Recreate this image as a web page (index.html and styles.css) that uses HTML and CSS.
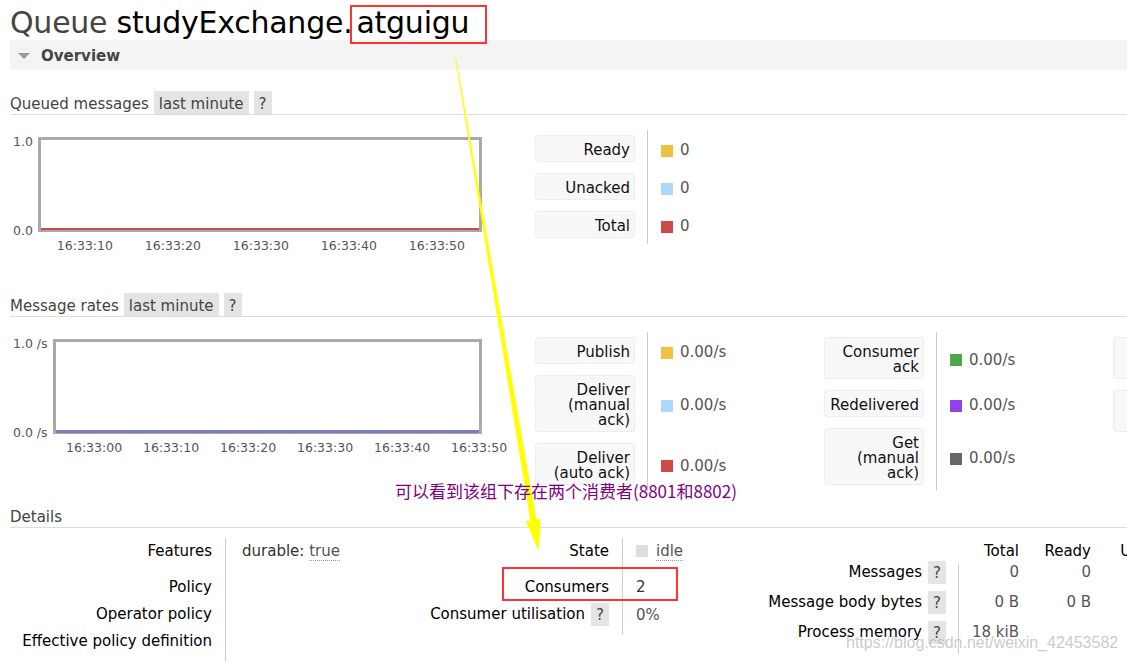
FILE: index.html
```html
<!DOCTYPE html>
<html lang="en">
<head>
    <meta charset="UTF-8">
    <meta name="viewport" content="width=device-width, initial-scale=1.0">
    <title>RabbitMQ Management - Queue studyExchange.atguigu</title>
    <link rel="stylesheet" href="styles.css">
</head>
<body>
    <div id="main">
        <h1>Queue <b>studyExchange.<span class="mark">atguigu</span></b></h1>

        <!-- Overview -->
        <div class="section-bar"><span class="toggle"></span>Overview</div>

        <h3 class="sub-head">Queued messages <span class="tag">last minute</span><span class="help">?</span></h3>
        <div class="chart-row">
            <div class="chart">
                <div class="y-axis"><span>1.0</span><span>0.0</span></div>
                <div class="plot-col">
                    <div class="plot"><div class="series red"></div></div>
                    <div class="x-axis">
                        <span>16:33:10</span><span>16:33:20</span><span>16:33:30</span><span>16:33:40</span><span>16:33:50</span>
                    </div>
                </div>
            </div>
            <div class="legend">
                <div class="legend-group">
                    <div class="divider"></div>
                    <div class="lbl">Ready</div><div class="val"><i class="sq yellow"></i>0</div>
                    <div class="lbl">Unacked</div><div class="val"><i class="sq blue"></i>0</div>
                    <div class="lbl">Total</div><div class="val"><i class="sq red"></i>0</div>
                </div>
            </div>
        </div>

        <h3 class="sub-head rates-head">Message rates <span class="tag">last minute</span><span class="help">?</span></h3>
        <div class="chart-row">
            <div class="chart">
                <div class="y-axis"><span>1.0 /s</span><span>0.0 /s</span></div>
                <div class="plot-col">
                    <div class="plot"><div class="series purple"></div></div>
                    <div class="x-axis rates">
                        <span>16:33:00</span><span>16:33:10</span><span>16:33:20</span><span>16:33:30</span><span>16:33:40</span><span>16:33:50</span>
                    </div>
                </div>
            </div>
            <div class="legend">
                <div class="legend-group">
                    <div class="divider"></div>
                    <div class="lbl">Publish</div><div class="val"><i class="sq yellow"></i>0.00/s</div>
                    <div class="lbl">Deliver (manual ack)</div><div class="val"><i class="sq blue"></i>0.00/s</div>
                    <div class="lbl">Deliver (auto ack)</div><div class="val"><i class="sq red"></i>0.00/s</div>
                </div>
                <div class="legend-group">
                    <div class="divider"></div>
                    <div class="lbl">Consumer ack</div><div class="val"><i class="sq green"></i>0.00/s</div>
                    <div class="lbl">Redelivered</div><div class="val"><i class="sq violet"></i>0.00/s</div>
                    <div class="lbl">Get (manual ack)</div><div class="val"><i class="sq grey"></i>0.00/s</div>
                </div>
                <div class="legend-group">
                    <div class="divider"></div>
                    <div class="lbl">Get (auto ack)</div><div class="val"><i class="sq yellow"></i>0.00/s</div>
                    <div class="lbl">Get (empty)</div><div class="val"><i class="sq blue"></i>0.00/s</div>
                </div>
            </div>
        </div>

        <!-- Details -->
        <h3 class="sub-head details-head">Details</h3>
        <div class="details">
            <div class="facts left">
                <div class="th tall">Features</div><div class="td tall">durable: <abbr>true</abbr></div>
                <div class="th">Policy</div><div class="td"></div>
                <div class="th">Operator policy</div><div class="td"></div>
                <div class="th last">Effective policy definition</div><div class="td last"></div>
            </div>
            <div class="facts mid">
                <div class="th tall">State</div><div class="td tall"><i class="state"></i><abbr>idle</abbr></div>
                <div class="th">Consumers</div><div class="td">2</div>
                <div class="th help-row last">Consumer utilisation <span class="help">?</span></div><div class="td help-row last">0%</div>
            </div>
            <div class="stats">
                <div class="s-divider"></div>
                <div class="s-head c5">Total</div><div class="s-head c6">Ready</div><div class="s-head c7">Unacked</div>
                <div class="s-th">Messages</div><div class="s-help"><span class="help">?</span></div>
                <div class="s-val c5">0</div><div class="s-val c6">0</div><div class="s-val c7">0</div>
                <div class="s-th">Message body bytes</div><div class="s-help"><span class="help">?</span></div>
                <div class="s-val c5">0 B</div><div class="s-val c6">0 B</div><div class="s-val c7">0 B</div>
                <div class="s-th">Process memory</div><div class="s-help"><span class="help">?</span></div>
                <div class="s-val c5">18 kiB</div>
            </div>
        </div>
    </div>

    <!-- Annotations drawn over the page -->
    <div class="annotations">
        <svg class="arrow" width="1127" height="662" viewBox="0 0 1127 662">
            <polygon fill="#ffff00" points="455,57.1 456,56.9 536.3,519.5 540.7,518.8 538.5,551 525.9,521.2 530.3,520.5"/>
        </svg>
        <div class="note" lang="zh-CN">可以看到该组下存在两个消费者(8801和8802)</div>
        <div class="red-box"></div>
        <div class="watermark">https://blog.csdn.net/weixin_42453582</div>
    </div>
</body>
</html>
```

FILE: styles.css
```css
/* Page */
body {
    margin: 0;
    width: 1127px;
    height: 662px;
    position: relative;
    overflow: hidden;
    font-family: "DejaVu Sans", Verdana, sans-serif;
    font-size: 15px;
    line-height: 15px;
    color: #444;
    background: #fff;
}
#main {
    padding-left: 10px;
}
h1 {
    margin: 6px 0 0 0;
    font-size: 30px;
    line-height: 34px;
    font-weight: normal;
    letter-spacing: -0.25px;
    color: #444;
    white-space: nowrap;
}
h1 b {
    font-weight: normal;
    color: #000;
}
.mark {
    position: relative;
    margin-left: 4px;
}
.mark::after {
    content: "";
    position: absolute;
    left: -6px;
    right: -18px;
    top: 0;
    bottom: -4px;
    border: 2px solid #f33;
}

/* Section bar */
.section-bar {
    height: 30px;
    box-sizing: border-box;
    padding-top: 2px;
    background: #f4f4f4;
    display: flex;
    align-items: center;
    font-weight: bold;
    color: #444;
}
.toggle {
    width: 0;
    height: 0;
    border-left: 6.5px solid transparent;
    border-right: 6.5px solid transparent;
    border-top: 6px solid #9a9a9a;
    margin: 0 11px 0 8px;
}

/* Sub headings */
.sub-head {
    margin: 21px 0 0 0;
    height: 23px;
    display: flex;
    align-items: stretch;
    gap: 5px;
    line-height: 26px;
    border-bottom: 1px solid #ddd;
    font-size: 15px;
    font-weight: normal;
    color: #444;
    white-space: nowrap;
}
.rates-head {
    margin-top: 40px;
}
.details-head {
    margin-top: 13px;
}
.tag,
.help {
    display: inline-block;
    padding: 0 5px;
    background: #e4e4e4;
    color: #444;
}

/* Charts */
.chart-row {
    display: flex;
    align-items: flex-start;
    gap: 53px;
    margin-top: 15px;
}
.chart {
    width: 472px;
    flex-shrink: 0;
    display: flex;
    margin-top: 7px;
}
.y-axis {
    height: 104px;
    margin: -3px 5px 0 3px;
    display: flex;
    flex-direction: column;
    justify-content: space-between;
    align-items: flex-end;
    font-size: 12.5px;
    color: #555;
    white-space: nowrap;
}
.plot-col {
    flex: 1;
    min-width: 0;
}
.plot {
    height: 95px;
    box-sizing: border-box;
    border: 3px solid #aaa;
    display: flex;
    align-items: flex-end;
}
.series {
    width: 100%;
    height: 2px;
    margin-bottom: -1px;
}
.series.purple {
    background: #7b7bc2;
    height: 3px;
    margin-bottom: -2px;
}
.x-axis {
    display: grid;
    grid-auto-flow: column;
    grid-auto-columns: 88px;
    margin-top: 6px;
    padding-left: 3px;
    font-size: 12.5px;
    color: #555;
    text-align: center;
    white-space: nowrap;
}
.x-axis.rates {
    grid-auto-columns: 77px;
}

/* Legends */
.legend {
    display: flex;
    align-items: flex-start;
    flex-shrink: 0;
}
.legend-group {
    width: 289px;
    flex-shrink: 0;
    display: grid;
    grid-template-columns: 100px 1px 1fr;
    align-content: start;
    column-gap: 12px;
    row-gap: 11px;
    padding: 5px 0 6px 0;
}
.divider {
    grid-column: 2;
    grid-row: 1 / span 3;
    background: #ccc;
    margin: -5px 0 -6px 0;
}
.lbl {
    grid-column: 1;
    box-sizing: border-box;
    padding: 6.5px 4px 3.5px 4px;
    background: #f8f8f8;
    border: 1px solid #eee;
    border-radius: 3px;
    text-align: right;
    color: #111;
}
.val {
    grid-column: 3;
    align-self: center;
    display: flex;
    align-items: center;
    gap: 7px;
    padding: 4px 0 0 1px;
    color: #555;
    white-space: nowrap;
}
.sq {
    display: inline-block;
    width: 12px;
    height: 12px;
}
.yellow { background: #edc240; }
.blue { background: #afd8f8; }
.red { background: #cb4b4b; }
.green { background: #4da74d; }
.violet { background: #9440ed; }
.grey { background: #666; }

/* Details */
.details {
    display: flex;
    align-items: flex-start;
    margin-top: 9.5px;
    white-space: nowrap;
}
.facts {
    display: grid;
    grid-template-columns: 215px 197px;
}
.facts.mid {
    grid-template-columns: 200px 100px;
}
.th {
    padding: 6px 13px 6px 0;
    text-align: right;
    color: #000;
}
.td {
    padding: 6px 0 6px 16px;
    border-left: 1px solid #ccc;
    color: #333;
}
.mid .td {
    padding-left: 13px;
}
.th.tall,
.td.tall {
    padding-bottom: 15px;
}
.th.help-row {
    display: flex;
    justify-content: flex-end;
    align-items: center;
    gap: 6px;
    padding-top: 2.5px;
    padding-bottom: 2.5px;
}
.th.help-row .help {
    height: 23px;
    line-height: 25px;
}
.td.help-row {
    display: flex;
    align-items: center;
    padding-top: 4px;
    padding-bottom: 1px;
    color: #555;
}
.left .last {
    padding-bottom: 12px;
}
.mid .last {
    padding-bottom: 9px;
}
abbr {
    text-decoration: none;
    border-bottom: 1px dotted #999;
    color: #555;
}
.state {
    display: inline-block;
    width: 12px;
    height: 12px;
    margin-right: 8px;
    vertical-align: -1px;
    background: #ddd;
}
.stats {
    display: grid;
    grid-template-columns: 206px 18px 12px 1px 60px 72px 94px;
    align-items: center;
}
.s-divider {
    grid-column: 4;
    grid-row: 2 / span 3;
    align-self: stretch;
    background: #ccc;
    margin: 7px 0 -7px 0;
}
.s-head {
    height: 19.5px;
    padding-top: 6px;
    box-sizing: border-box;
    align-self: start;
    color: #000;
}
.s-th {
    grid-column: 1;
    height: 30px;
    line-height: 30px;
    padding-right: 6px;
    text-align: right;
    color: #000;
}
.s-help {
    grid-column: 2;
    height: 23px;
}
.s-help .help {
    padding: 0;
    width: 18px;
    height: 23px;
    line-height: 25px;
    text-align: center;
}
.s-val {
    color: #555;
}
.c5 { grid-column: 5; text-align: right; }
.c6 { grid-column: 6; text-align: right; }
.c7 { grid-column: 7; text-align: right; }

/* Annotations */
.annotations {
    position: absolute;
    top: 0;
    left: 0;
    width: 1127px;
    height: 662px;
    pointer-events: none;
}
.arrow {
    position: absolute;
    top: 0;
    left: 0;
}
.note {
    position: absolute;
    left: 395px;
    top: 481px;
    font-family: "Noto Sans CJK SC", sans-serif;
    font-size: 17px;
    line-height: 20px;
    color: #800080;
    white-space: nowrap;
}
.red-box {
    position: absolute;
    left: 502px;
    top: 567px;
    width: 176px;
    height: 34px;
    box-sizing: border-box;
    border: 2px solid #f33;
}
.watermark {
    position: absolute;
    left: 846px;
    top: 634px;
    font-family: "Liberation Sans", Arial, sans-serif;
    font-size: 16px;
    line-height: 18px;
    color: rgba(150, 150, 150, 0.5);
    white-space: nowrap;
}
```
